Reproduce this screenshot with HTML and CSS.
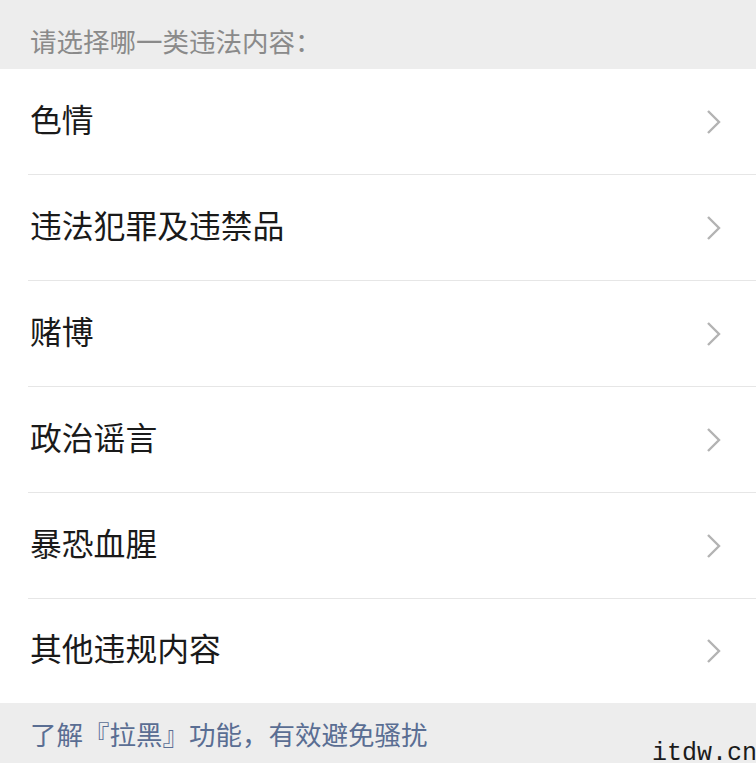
FILE: index.html
```html
<!DOCTYPE html>
<html lang="zh-CN">
<head>
<meta charset="UTF-8">
<meta name="viewport" content="width=device-width, initial-scale=1.0">
<title>投诉</title>
<link rel="stylesheet" href="styles.css">
</head>
<body>
  <div class="section-title">请选择哪一类违法内容：</div>

  <ul class="report-list">
    <li class="report-item"><span class="item-label">色情</span><svg class="arrow" viewBox="0 0 16 26"><path d="M2 2 L13 13 L2 24"/></svg></li>
    <li class="report-item"><span class="item-label">违法犯罪及违禁品</span><svg class="arrow" viewBox="0 0 16 26"><path d="M2 2 L13 13 L2 24"/></svg></li>
    <li class="report-item"><span class="item-label">赌博</span><svg class="arrow" viewBox="0 0 16 26"><path d="M2 2 L13 13 L2 24"/></svg></li>
    <li class="report-item"><span class="item-label">政治谣言</span><svg class="arrow" viewBox="0 0 16 26"><path d="M2 2 L13 13 L2 24"/></svg></li>
    <li class="report-item"><span class="item-label">暴恐血腥</span><svg class="arrow" viewBox="0 0 16 26"><path d="M2 2 L13 13 L2 24"/></svg></li>
    <li class="report-item"><span class="item-label">其他违规内容</span><svg class="arrow" viewBox="0 0 16 26"><path d="M2 2 L13 13 L2 24"/></svg></li>
  </ul>

  <div class="footer">
    <a class="footer-link" href="#">了解『拉黑』功能，有效避免骚扰</a>
  </div>

  <div class="watermark">itdw.cn</div>
</body>
</html>
```

FILE: styles.css
```css
body {
  font-family: "Noto Sans CJK SC", "Noto Sans", sans-serif;
  background-color: #ededed;
  margin: 0;
  padding: 0;
  height: 763px;
  overflow: hidden;
  position: relative;
}

.section-title {
  height: 69px;
  box-sizing: border-box;
  padding: 22px 0 0 30px;
  font-size: 26.5px;
  line-height: 38px;
  color: #8a8a8a;
}

.report-list {
  list-style: none;
  margin: 0;
  padding: 0 0 0 28px;
  background-color: #fff;
}

.report-item {
  display: flex;
  align-items: center;
  justify-content: space-between;
  height: 105px;
  padding: 0 34px 0 2px;
  border-bottom: 1px solid #e6e6e6;
  font-size: 31.8px;
  color: #1a1a1a;
}

.report-item:last-child {
  border-bottom: none;
  height: 104px;
}

.item-label {
  padding-bottom: 8px;
}

.arrow {
  width: 16px;
  height: 26px;
  fill: none;
  stroke: #b3b3b3;
  stroke-width: 2.4;
}

.footer {
  padding: 12px 0 0 30px;
  height: 61px;
  box-sizing: border-box;
}

.footer-link {
  font-size: 26.5px;
  line-height: 38px;
  color: #5a6e93;
  text-decoration: none;
}

/* site mark in the corner, partly running off the edge */
.watermark {
  position: absolute;
  left: 652px;
  bottom: 0;
  height: 18px;
  font-family: "Liberation Mono", monospace;
  font-size: 25px;
  line-height: 18px;
  color: #1c1c1c;
  white-space: nowrap;
}
```
